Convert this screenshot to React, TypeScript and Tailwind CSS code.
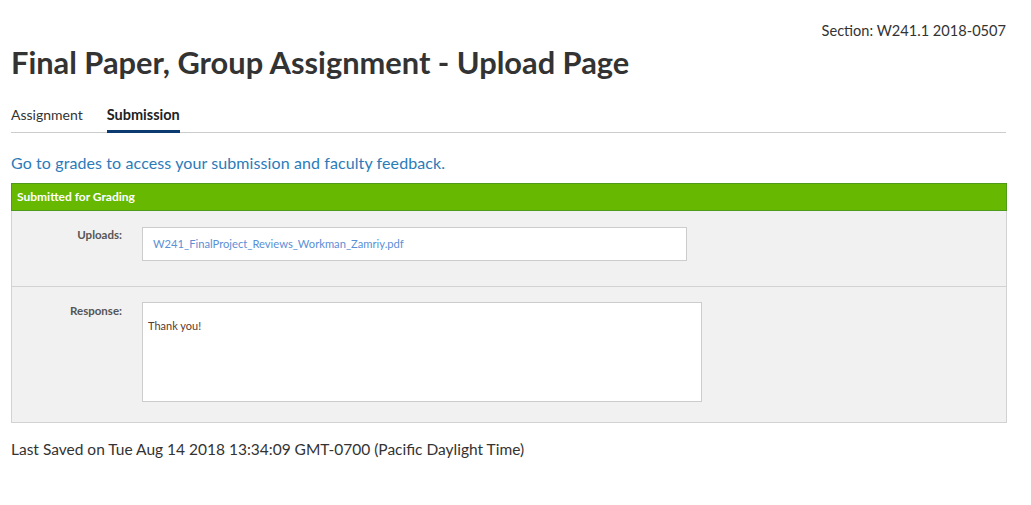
export default function App() {
  return (
    <div className="min-h-[505px] bg-white px-[11px] pt-[22px] text-[#333]" style={{ fontFamily: 'Lato, "Open Sans", sans-serif' }}>
      <div className="flex justify-end pr-[14px] text-[14.6px] leading-[18px]">Section: W241.1 2018-0507</div>
      <h1 className="mt-[6px] text-[30.8px] font-bold leading-[34px] text-[#333]">Final Paper, Group Assignment - Upload Page</h1>
      <div className="mr-[14px] mt-[26px] flex gap-[24px] border-b border-[#cccccc] text-[14px]">
        <div className="pb-[8px] leading-[18px]">Assignment</div>
        <div className="-mb-px border-b-[3px] border-[#0b3a70] pb-[6px] text-[14.5px] font-bold leading-[18px] text-[#222]">Submission</div>
      </div>
      <a className="mt-[21px] block text-[16px] tracking-[0.1px] leading-[18px] text-[#2b7bb9]">Go to grades to access your submission and faculty feedback.</a>
      <div className="mr-[13px] mt-[11px]">
        <div className="border border-[#4e9a1c] bg-[#66b800] px-[5px] text-[12px] font-bold leading-[26px] text-white">Submitted for Grading</div>
        <div className="border border-t-0 border-[#d2d2d2] bg-[#f1f1f1]">
          <div className="flex h-[76px] border-b border-[#d2d2d2] pt-[16px]">
            <div className="w-[110px] text-right text-[11.5px] font-bold leading-[16px] text-[#555]">Uploads:</div>
            <div className="ml-[20px] flex h-[34px] w-[545px] items-center border border-[#cccccc] bg-white px-[10px] text-[11.2px] text-[#5b8fd6]">W241_FinalProject_Reviews_Workman_Zamriy.pdf</div>
          </div>
          <div className="flex h-[135px] pt-[15px]">
            <div className="w-[110px] pt-[1px] text-right text-[11.5px] font-bold leading-[16px] text-[#555]">Response:</div>
            <div className="ml-[20px] h-[100px] w-[560px] border border-[#cccccc] bg-white px-[5px] pt-[16px] text-[11px] leading-[14px] text-[#5a3a30]">Thank you!</div>
          </div>
        </div>
      </div>
      <div className="mt-[17px] text-[15.5px] leading-[18px]">Last Saved on Tue Aug 14 2018 13:34:09 GMT-0700 (Pacific Daylight Time)</div>
    </div>
  );
}
